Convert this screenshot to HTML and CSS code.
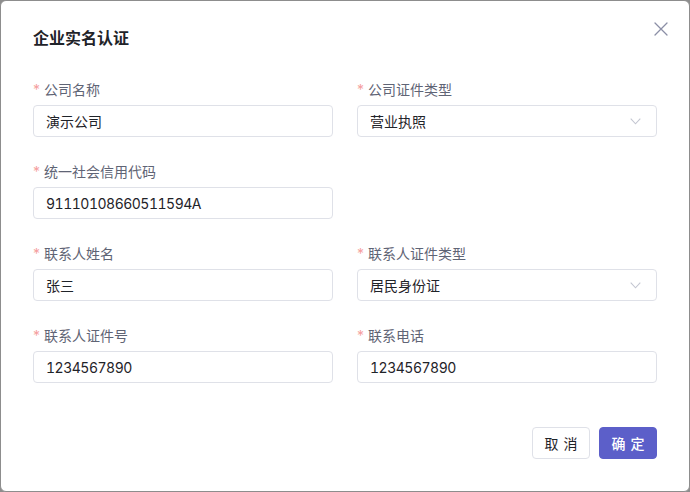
FILE: index.html
```html
<!DOCTYPE html>
<html lang="zh-CN">
<head>
<meta charset="utf-8">
<title>企业实名认证</title>
<link rel="stylesheet" href="styles.css">
</head>
<body>
<div class="dialog">
  <div class="dialog-header">
    <h2 class="dialog-title">企业实名认证</h2>
    <button class="close-btn" type="button" aria-label="关闭">
      <svg width="14" height="14" viewBox="0 0 14 14"><path d="M1 1L13 13M13 1L1 13" stroke="#8b8fa6" stroke-width="1.3" fill="none" stroke-linecap="round"/></svg>
    </button>
  </div>
  <form class="form">
    <div class="form-item">
      <label class="form-label"><span class="req">*</span>公司名称</label>
      <div class="input"><span class="value">演示公司</span></div>
    </div>
    <div class="form-item">
      <label class="form-label"><span class="req">*</span>公司证件类型</label>
      <div class="input select"><span class="value">营业执照</span>
        <svg class="chevron" width="11" height="7" viewBox="0 0 11 7"><path d="M0.7 0.7L5.5 5.8L10.3 0.7" stroke="#c3c6d1" stroke-width="1.1" fill="none"/></svg>
      </div>
    </div>
    <div class="form-item">
      <label class="form-label"><span class="req">*</span>统一社会信用代码</label>
      <div class="input"><span class="value num">91110108660511594A</span></div>
    </div>
    <div class="form-item empty"></div>
    <div class="form-item">
      <label class="form-label"><span class="req">*</span>联系人姓名</label>
      <div class="input"><span class="value">张三</span></div>
    </div>
    <div class="form-item">
      <label class="form-label"><span class="req">*</span>联系人证件类型</label>
      <div class="input select"><span class="value">居民身份证</span>
        <svg class="chevron" width="11" height="7" viewBox="0 0 11 7"><path d="M0.7 0.7L5.5 5.8L10.3 0.7" stroke="#c3c6d1" stroke-width="1.1" fill="none"/></svg>
      </div>
    </div>
    <div class="form-item">
      <label class="form-label"><span class="req">*</span>联系人证件号</label>
      <div class="input"><span class="value num">1234567890</span></div>
    </div>
    <div class="form-item">
      <label class="form-label"><span class="req">*</span>联系电话</label>
      <div class="input"><span class="value num">1234567890</span></div>
    </div>
  </form>
  <div class="dialog-footer">
    <button class="btn" type="button"><span>取消</span></button>
    <button class="btn btn-primary" type="button"><span>确定</span></button>
  </div>
</div>
</body>
</html>
```

FILE: styles.css
```css
html, body {
  margin: 0;
  padding: 0;
}
body {
  background: #8d8d8d;
  font-family: Inter, "Noto Sans CJK SC", sans-serif;
  font-size: 14px;
  color: #1f2329;
}
.dialog {
  box-sizing: border-box;
  width: 690px;
  height: 492px;
  background: #fff;
  border: 1px solid #8d8d8d;
  border-radius: 6px;
  display: flex;
  flex-direction: column;
}
.dialog-header {
  display: flex;
  justify-content: space-between;
  align-items: flex-start;
  padding: 21px 21px 0 32px;
}
.dialog-title {
  margin: 4px 0 0 0;
  font-size: 16px;
  line-height: 24px;
  font-weight: 700;
  color: #1f2329;
}
.close-btn {
  border: 0;
  background: none;
  padding: 0;
  width: 14px;
  height: 14px;
  display: block;
}
.close-btn svg { display: block; }
.form {
  margin: 29px 0 0 32px;
  display: grid;
  grid-template-columns: 300px 300px;
  column-gap: 24px;
  row-gap: 24px;
}
.form-label {
  display: block;
  height: 22px;
  line-height: 22px;
  margin-bottom: 4px;
  color: #5f6475;
  font-size: 14px;
}
.req {
  color: #f5a0a0;
  margin-right: 4px;
}
.input {
  box-sizing: border-box;
  height: 32px;
  border: 1px solid #dfe1e8;
  border-radius: 4px;
  padding: 0 12px;
  display: flex;
  align-items: center;
  justify-content: space-between;
  color: #1f2329;
  font-size: 14px;
}
.num {
  font-variant-numeric: tabular-nums;
  letter-spacing: -0.5px;
}
.select .chevron {
  display: block;
  margin-right: 3px;
}
.dialog-footer {
  margin-top: auto;
  display: flex;
  justify-content: flex-end;
  gap: 9px;
  padding: 0 32px 32px 0;
}
.btn {
  box-sizing: border-box;
  flex-shrink: 0;
  white-space: nowrap;
  width: 58px;
  height: 32px;
  padding: 0;
  border: 1px solid #dfe1e8;
  border-radius: 4px;
  background: #fff;
  color: #1f2329;
  font-family: Inter, "Noto Sans CJK SC", sans-serif;
  font-size: 14px;
  letter-spacing: 5px;
}
.btn span { margin-right: -5px; }
.btn-primary {
  background: #5c5fc9;
  border-color: #5c5fc9;
  color: #fff;
  font-weight: 500;
}
```
